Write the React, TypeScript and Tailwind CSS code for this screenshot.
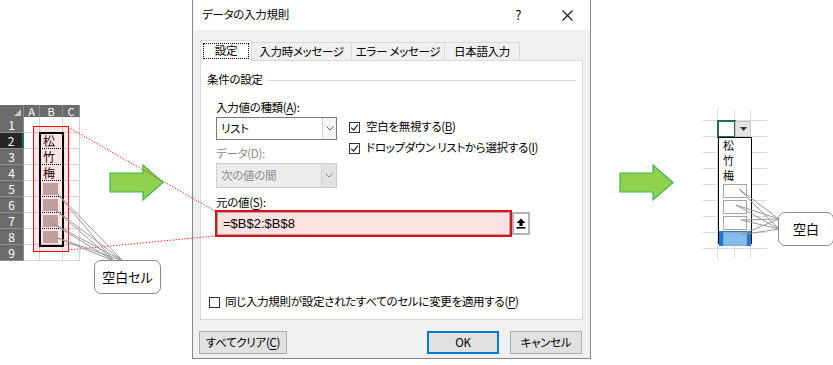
import React from 'react';

const U: React.FC<{ c: string }> = ({ c }) => <span className="underline underline-offset-[2px]">{c}</span>;

const Check: React.FC<{ on?: boolean }> = ({ on }) => (
  <span className="w-[11px] h-[11px] shrink-0 border border-[#333] bg-white flex items-center justify-center">
    {on && (
      <svg width="9" height="9" viewBox="0 0 9 9">
        <path d="M1.2 4.6 L3.6 7 L7.9 1.6" stroke="#222" strokeWidth="1.2" fill="none" />
      </svg>
    )}
  </span>
);

const Chevron: React.FC<{ color?: string }> = ({ color = '#666' }) => (
  <svg width="8" height="5" viewBox="0 0 8 5">
    <path d="M0.5 0.5 L4 4 L7.5 0.5" stroke={color} strokeWidth="1" fill="none" />
  </svg>
);

const SheetLeft: React.FC = () => {
  const kanji: Record<number, string> = { 2: '松', 3: '竹', 4: '梅' };
  return (
    <div className="absolute left-0 top-[105px] grid grid-cols-[24px_16px_23px_17px] grid-rows-[12px_repeat(9,16px)]">
      <div className="bg-[#6b6b6b] border-r border-[#8e8e8e] flex items-end justify-end pr-[2px] pb-[1px]">
        <svg width="7" height="7" viewBox="0 0 7 7"><path d="M7 0 L7 7 L0 7 Z" fill="#c8c8c8" /></svg>
      </div>
      {['A', 'B', 'C'].map((c) => (
        <div key={c} className="bg-[#6b6b6b] border-r border-[#8e8e8e] text-white text-[11px] leading-none flex items-center justify-center">
          {c}
        </div>
      ))}
      {[1, 2, 3, 4, 5, 6, 7, 8, 9].map((r) => (
        <React.Fragment key={r}>
          <div
            className={`text-white text-[12px] leading-none flex items-center justify-center border-b border-[#8e8e8e] ${
              r === 2 ? 'bg-[#262626] border-r-2 border-r-[#217346]' : 'bg-[#6b6b6b] border-r border-r-[#8e8e8e]'
            }`}
          >
            {r}
          </div>
          <div className="bg-white border-r border-b border-[#d4d4d4]" />
          <div
            className={`bg-white border-r border-[#d4d4d4] flex items-center overflow-hidden ${
              r >= 2 && r <= 7 ? 'border-b border-b-black border-dotted' : 'border-b'
            }`}
          >
            {kanji[r] && <span className="pl-[3px] text-[12px] leading-[14px] text-black">{kanji[r]}</span>}
            {r >= 5 && r <= 8 && <span className="ml-[3px] w-[15px] h-[12px] bg-[#b7b0b0]" />}
          </div>
          <div className="bg-white border-r border-b border-[#d4d4d4]" />
        </React.Fragment>
      ))}
    </div>
  );
};

const SheetRight: React.FC = () => (
  <>
    <div className="absolute left-[703px] top-[110px] grid grid-cols-[15px_17px_16px_16px] grid-rows-[11px_repeat(8,16px)_9px]">
      {Array.from({ length: 40 }).map((_, i) => (
        <div key={i} className={`${i % 4 === 3 ? '' : 'border-r'} ${i >= 36 ? '' : 'border-b'} border-[#dcdcdc]`} />
      ))}
    </div>
    <div className="absolute left-[717px] top-[120px] w-[19px] h-[18px] border-2 border-[#217346]" />
    <div className="absolute left-[735px] top-[121px] w-[16px] h-[16px] bg-[#e4e4e4] border border-[#c6c6c6] flex items-center justify-center">
      <svg width="7" height="4" viewBox="0 0 7 4"><path d="M0 0 H7 L3.5 4 Z" fill="#333" /></svg>
    </div>
    <div className="absolute left-[718px] top-[137px] w-[34px] h-[107px] bg-white border border-black flex flex-col">
      <div className="flex flex-col">
        {['松', '竹', '梅'].map((k) => (
          <div key={k} className="h-[15px] pl-[4px] text-[11px] leading-[15px] text-black">{k}</div>
        ))}
      </div>
      <div className="mt-[0px] flex flex-col gap-[1px]">
        {[0, 1, 2].map((i) => (
          <div key={i} className="h-[15px] pl-[4px] pr-[3px] flex items-center">
            <div className="w-[24px] h-[14px] border border-[#a6a6a6] bg-white" />
          </div>
        ))}
        <div className="h-[15px] pl-[4px] pr-[3px] flex items-center bg-[#1e7bd4]">
          <div className="w-[24px] h-[14px] border border-[#8aa6c0] bg-[#86bcec]" />
        </div>
      </div>
    </div>
  </>
);

const Overlay: React.FC = () => {
  const arrow = (x: number) =>
    `${x},173 ${x + 33},173 ${x + 33},165 ${x + 53},182.5 ${x + 33},200 ${x + 33},192 ${x},192`;
  const leftFrom = [
    [55, 191],
    [53, 208],
    [50, 222],
    [55, 237],
  ];
  const rightFrom = [
    [739, 189],
    [736, 205],
    [741, 220],
    [740, 235],
  ];
  return (
    <svg className="absolute left-0 top-0 pointer-events-none" width="833" height="365" viewBox="0 0 833 365">
      <polygon points={arrow(110)} fill="#92d050" stroke="#3cb44b" strokeWidth="1.2" />
      <polygon points={arrow(620)} fill="#92d050" stroke="#3cb44b" strokeWidth="1.2" />
      <line x1="68" y1="127" x2="215" y2="211" stroke="#ff3030" strokeWidth="1" strokeDasharray="1.5 1.5" />
      <line x1="68" y1="250" x2="215" y2="236" stroke="#ff3030" strokeWidth="1" strokeDasharray="1.5 1.5" />
      {leftFrom.map(([x, y], i) => (
        <g key={i} stroke="#9a9a9a" strokeWidth="1" fill="none">
          <line x1={x} y1={y} x2={114} y2={261} />
          <line x1={x} y1={y} x2={123} y2={261} />
        </g>
      ))}
      {rightFrom.map(([x, y], i) => (
        <g key={i} stroke="#9a9a9a" strokeWidth="1" fill="none">
          <line x1={x} y1={y} x2={779} y2={219} />
          <line x1={x} y1={y} x2={779} y2={229} />
        </g>
      ))}
    </svg>
  );
};

const Dialog: React.FC = () => {
  const tabs = [
    { t: '設定', w: 'w-[52px]', on: true },
    { t: '入力時メッセージ', w: 'w-[100px]', on: false },
    { t: 'エラー メッセージ', w: 'w-[93px]', on: false },
    { t: '日本語入力', w: 'w-[75px]', on: false },
  ];
  return (
    <div className="absolute left-[192px] top-0 w-[399px] h-[359px] border border-t-0 border-[#888] bg-[#f0f0f0] flex flex-col text-[11.5px] tracking-[-0.3px] text-black">
      <div className="h-[30px] bg-white flex items-center pl-[9px] pr-[17px]">
        <span>データの入力規則</span>
        <span className="flex-1" />
        <span className="text-[13px] mr-[41px]">?</span>
        <svg width="11" height="11" viewBox="0 0 11 11">
          <path d="M0.5 0.5 L10.5 10.5 M10.5 0.5 L0.5 10.5" stroke="#111" strokeWidth="1.1" />
        </svg>
      </div>

      <div className="mt-[10px] px-[7px] h-[21px] flex items-end">
        {tabs.map((tab) =>
          tab.on ? (
            <div key={tab.t} className={`${tab.w} h-[21px] bg-white border border-b-0 border-[#d9d9d9] relative z-10 p-[2px]`}>
              <div className="h-full border border-dotted border-black flex items-center justify-center">{tab.t}</div>
            </div>
          ) : (
            <div key={tab.t} className={`${tab.w} h-[18px] mb-[1px] bg-[#f0f0f0] border border-l-0 border-b-0 border-[#d9d9d9] flex items-center justify-center`}>
              {tab.t}
            </div>
          )
        )}
      </div>

      <div className="mx-[7px] -mt-[1px] h-[260px] bg-white border border-[#d9d9d9] flex flex-col pt-[11px] pl-[6px] pr-[6px]">
        <div className="h-[16px] flex items-center gap-[4px]">
          <span>条件の設定</span>
          <span className="flex-1 h-px bg-[#dcdcdc]" />
        </div>

        <div className="pl-[9px]">
          <div className="mt-[11px] flex">
            <div className="w-[121px] flex flex-col">
              <div className="h-[16px] leading-[16px]">
                入力値の種類(<U c="A" />):
              </div>
              <div className="mt-[2px] h-[23px] flex border border-[#7a7a7a] bg-white">
                <div className="flex-1 pl-[4px] flex items-center">リスト</div>
                <div className="w-[14px] border-l border-[#d0d0d0] bg-[#f6f6f6] flex items-center justify-center">
                  <Chevron />
                </div>
              </div>
              <div className="mt-[5px] h-[16px] leading-[16px] text-[#8c8c8c]">データ(D):</div>
              <div className="mt-[2px] h-[25px] flex border border-[#cccccc] bg-[#ececec] text-[#8c8c8c]">
                <div className="flex-1 pl-[4px] flex items-center">次の値の間</div>
                <div className="w-[15px] border-l border-[#cfcfcf] bg-[#e2e2e2] flex items-center justify-center">
                  <Chevron color="#8a8a8a" />
                </div>
              </div>
            </div>
            <div className="ml-[12px] pt-[20px] flex flex-col gap-[5px]">
              <div className="h-[16px] flex items-center gap-[6px]">
                <Check on />
                <span>
                  空白を無視する(<U c="B" />)
                </span>
              </div>
              <div className="h-[16px] flex items-center gap-[6px]">
                <Check on />
                <span>
                  ドロップダウン リストから選択する(<U c="I" />)
                </span>
              </div>
            </div>
          </div>

          <div className="mt-[6px] h-[16px] leading-[16px]">
            元の値(<U c="S" />):
          </div>
          <div className="h-[27px] flex items-center -ml-px">
            <div className="w-[297px] h-[27px] border-2 border-[#e0101a]">
              <div className="h-full border border-[#a8a8a8] bg-[#fde2e2] flex items-center pl-[5px] text-[13px] tracking-normal font-['Liberation_Sans','Noto_Sans_CJK_JP',sans-serif]">
                =$B$2:$B$8
              </div>
            </div>
            <div className="w-[18px] h-[23px] border-2 border-[#b5b5b5] bg-white flex items-center justify-center">
              <svg width="10" height="11" viewBox="0 0 10 11">
                <path d="M5 0.5 L9.5 5 H6.6 V8 H3.4 V5 H0.5 Z" fill="#000" />
                <rect x="0.5" y="9" width="9" height="1.6" fill="#000" />
              </svg>
            </div>
          </div>
        </div>

        <div className="mt-auto mb-[9px] pl-[2px] h-[16px] flex items-center gap-[5px]">
          <Check />
          <span>
            同じ入力規則が設定されたすべてのセルに変更を適用する(<U c="P" />)
          </span>
        </div>
      </div>

      <div className="mt-[11px] pl-[6px] pr-[8px] h-[23px] flex">
        <div className="w-[88px] h-[23px] bg-[#e1e1e1] border border-[#adadad] flex items-center justify-center">
          すべてクリア(<U c="C" />)
        </div>
        <div className="flex-1" />
        <div className="w-[72px] h-[23px] bg-[#e1e1e1] border-2 border-[#0078d7] flex items-center justify-center">OK</div>
        <div className="ml-[11px] w-[72px] h-[23px] bg-[#e1e1e1] border border-[#adadad] flex items-center justify-center">
          キャンセル
        </div>
      </div>
    </div>
  );
};

const App: React.FC = () => {
  return (
    <div className="relative w-[833px] h-[365px] overflow-hidden bg-white font-['Noto_Sans_CJK_JP','Noto_Sans',sans-serif] [font-feature-settings:'palt']">
      <SheetLeft />
      {/* selection frames on the left sheet */}
      <div className="absolute left-[33px] top-[126px] w-[36px] h-[126px] border-[1.5px] border-[#ff0000] bg-[#ff0000]/10" />
      <div className="absolute left-[39px] top-[132px] w-[25px] h-[115px] border-2 border-black" />
      <SheetRight />
      <Dialog />
      <Overlay />
      <div className="absolute left-[94px] top-[260px] w-[67px] h-[34px] rounded-[7px] border border-[#8a8a8a] bg-white flex items-center justify-center text-[13px]">
        空白セル
      </div>
      <div className="absolute left-[778px] top-[212px] w-[56px] h-[34px] rounded-[7px] border border-[#8a8a8a] bg-white flex items-center pl-[14px] text-[13px]">
        空白
      </div>
    </div>
  );
};

export default App;
